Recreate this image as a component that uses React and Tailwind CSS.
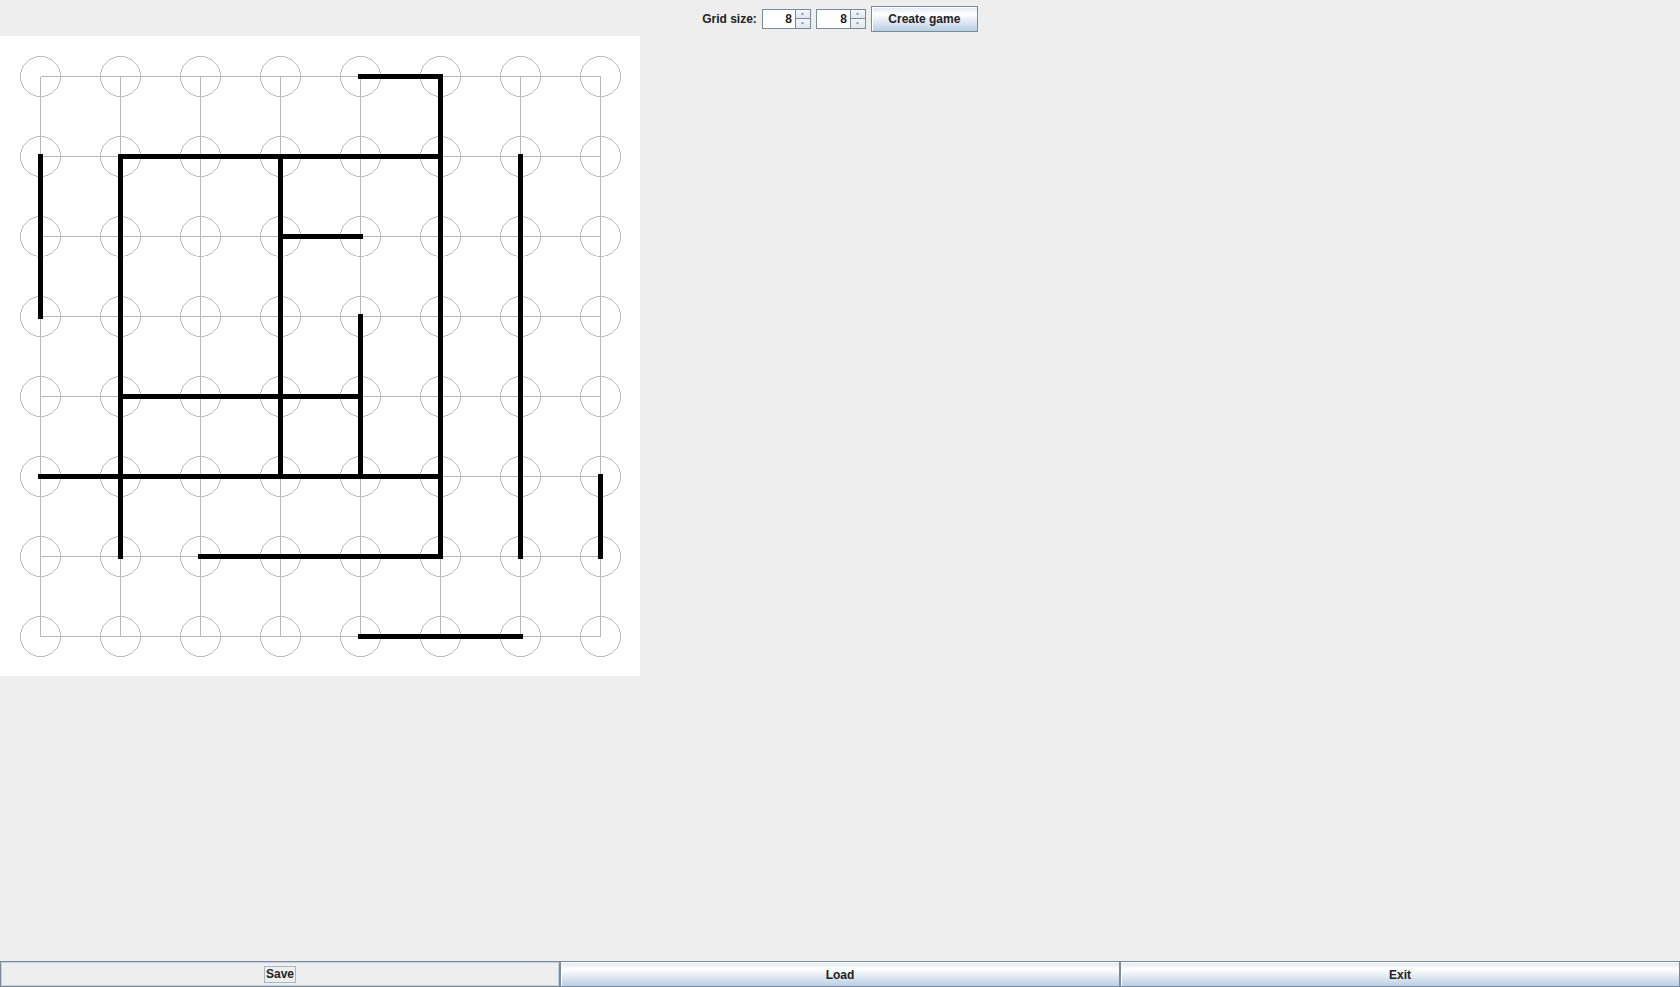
import React from 'react';

// board: 8x8 points, 80px apart, first point 40px in
const N = 8;
const STEP = 80;
const OFF = 40;

// thick walls, [col1, row1, col2, row2]
const walls = [
  [4, 0, 5, 0],
  [5, 0, 5, 6],
  [1, 1, 5, 1],
  [0, 1, 0, 3],
  [1, 1, 1, 6],
  [3, 1, 3, 5],
  [3, 2, 4, 2],
  [4, 3, 4, 5],
  [1, 4, 4, 4],
  [0, 5, 5, 5],
  [2, 6, 5, 6],
  [6, 1, 6, 6],
  [7, 5, 7, 6],
  [4, 7, 6, 7],
];

const p = (i) => OFF + i * STEP + 0.5;

function Board() {
  const idx = [...Array(N).keys()];
  return (
    <div className="w-[640px] h-[640px] bg-white shrink-0">
      <svg width="640" height="640" viewBox="0 0 640 640" shapeRendering="crispEdges">
        {idx.map((i) => (
          <g key={'g' + i} stroke="#b8b8b8" strokeWidth="1">
            <line x1={p(0)} y1={p(i)} x2={p(N - 1)} y2={p(i)} />
            <line x1={p(i)} y1={p(0)} x2={p(i)} y2={p(N - 1)} />
          </g>
        ))}
        {idx.map((r) =>
          idx.map((c) => (
            <circle key={r + '-' + c} cx={p(c)} cy={p(r)} r="20" fill="none" stroke="#bdbdbd" strokeWidth="1" />
          ))
        )}
        {walls.map(([c1, r1, c2, r2], k) => (
          <line
            key={'w' + k}
            x1={p(c1)}
            y1={p(r1)}
            x2={p(c2)}
            y2={p(r2)}
            stroke="#000"
            strokeWidth="5"
            strokeLinecap="square"
          />
        ))}
      </svg>
    </div>
  );
}

function Arrow({ up }) {
  return (
    <svg width="5" height="3" viewBox="0 0 5 3">
      <path d={up ? 'M2.5 0.5 L4 2.5 L1 2.5 Z' : 'M1 0.5 L4 0.5 L2.5 2.5 Z'} fill="#6b7785" />
    </svg>
  );
}

function Spinner({ value, w }) {
  return (
    <div className={`flex h-[20px] ${w} border border-[#7a8a99] bg-white`}>
      <div className="flex-1 flex items-center justify-end pr-[3px] pt-px text-[12px] font-bold text-[#222]">
        {value}
      </div>
      <div className="w-[15px] flex flex-col border-l border-[#7a8a99]">
        <div className="flex-1 flex items-center justify-center border-b border-[#7a8a99] bg-gradient-to-b from-[#f4f7fa] to-[#dfe8f1]">
          <Arrow up />
        </div>
        <div className="flex-1 flex items-center justify-center bg-gradient-to-b from-[#f4f7fa] to-[#dfe8f1]">
          <Arrow />
        </div>
      </div>
    </div>
  );
}

const metal =
  'bg-[linear-gradient(to_bottom,#dde8f3_0%,#ffffff_30%,#b8cfe5_100%)] border border-[#7a8a99] shadow-[inset_1px_1px_0_#ffffff]';

export default function App() {
  return (
    <div
      className="h-screen w-full flex flex-col bg-[#eeeeee] text-[#222] overflow-hidden"
      style={{ fontFamily: '"Liberation Sans", Arial, sans-serif' }}
    >
      {/* top controls */}
      <div className="h-[36px] shrink-0 flex items-center justify-center gap-[5px] pt-px">
        <span className="text-[12px] font-bold pt-px">Grid size:</span>
        <Spinner value="8" w="w-[49px]" />
        <Spinner value="8" w="w-[50px]" />
        <button className={`h-[26px] w-[107px] pt-px text-[12px] font-bold text-[#222] ${metal}`}>Create game</button>
      </div>

      {/* board area */}
      <div className="flex-1 min-h-0">
        <Board />
      </div>

      {/* bottom bar */}
      <div className="h-[26px] shrink-0 flex">
        <button className="flex-1 flex items-center justify-center pt-px bg-[#eeeeee] border border-[#7a8a99] shadow-[inset_1px_1px_0_#c4d3e2,inset_-1px_-1px_0_#c4d3e2] text-[12px] font-bold">
          <span className="border border-[#a3b8cc] px-px leading-[15px]">Save</span>
        </button>
        <button className={`flex-1 pt-px text-[12px] font-bold text-[#222] ${metal}`}>Load</button>
        <button className={`flex-1 pt-px text-[12px] font-bold text-[#222] ${metal}`}>Exit</button>
      </div>
    </div>
  );
}
